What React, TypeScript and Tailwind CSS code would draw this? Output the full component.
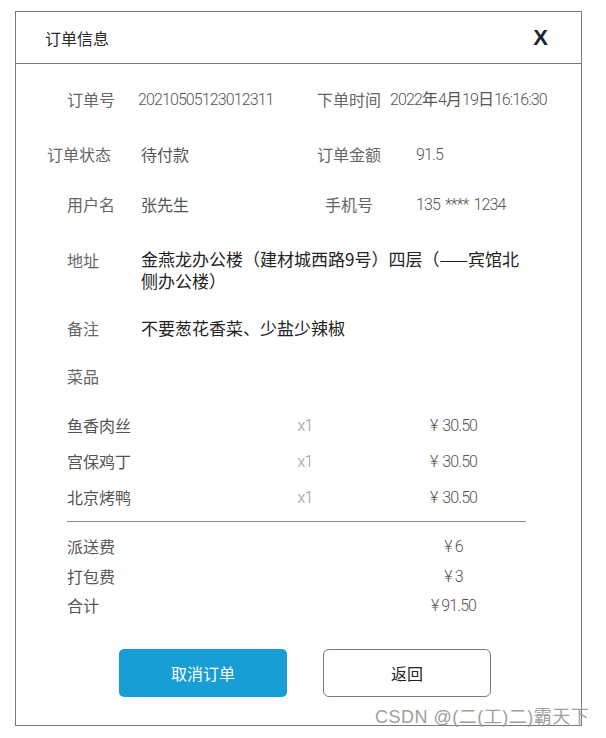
import React from "react";

function Num({ children, className = "" }: { children: React.ReactNode; className?: string }) {
  return (
    <span className={`font-['Roboto','Noto_Sans_CJK_SC',sans-serif] font-light tracking-[-0.9px] ${className}`}>
      {children}
    </span>
  );
}

const dishes = [
  { name: "鱼香肉丝", qty: "x1", price: "30.50" },
  { name: "宫保鸡丁", qty: "x1", price: "30.50" },
  { name: "北京烤鸭", qty: "x1", price: "30.50" },
];

export default function App() {
  return (
    <div className="relative w-[606px] h-[738px] bg-white overflow-hidden font-['Noto_Sans_CJK_SC',sans-serif]">
      <div className="ml-[15px] mt-[11px] w-[567px] h-[715px] border border-[#7a7a7a] flex flex-col">
        {/* Header */}
        <div className="h-[52px] border-b border-[#7a7a7a] flex items-center justify-between pl-[29px] pr-[33px]">
          <span className="text-[16px] text-[#2a2a2a] leading-none">订单信息</span>
          <span className="font-['Liberation_Sans',sans-serif] font-bold text-[22px] leading-none text-[#1c2330]">X</span>
        </div>

        {/* Row 1 */}
        <div className="mt-[23px] h-[24px] flex items-center text-[16px]">
          <div className="w-[98px] pl-[51px] text-[#666] whitespace-nowrap">订单号</div>
          <div className="ml-[24px] w-[179px] text-[#555] whitespace-nowrap">
            <Num>20210505123012311</Num>
          </div>
          <div className="w-[64px] text-center text-[#666] whitespace-nowrap">下单时间</div>
          <div className="ml-[9px] text-[#555] whitespace-nowrap">
            <Num>2022</Num>年<Num>4</Num>月<Num>19</Num>日<Num>16:16:30</Num>
          </div>
        </div>

        {/* Row 2 */}
        <div className="mt-[31px] h-[24px] flex items-center text-[16px]">
          <div className="w-[98px] pl-[31px] text-[#666] whitespace-nowrap">订单状态</div>
          <div className="ml-[27px] w-[176px] text-[#555] whitespace-nowrap">待付款</div>
          <div className="w-[64px] text-center text-[#666] whitespace-nowrap">订单金额</div>
          <div className="ml-[35px] text-[#555] whitespace-nowrap">
            <Num>91.5</Num>
          </div>
        </div>

        {/* Row 3 */}
        <div className="mt-[26px] h-[24px] flex items-center text-[16px]">
          <div className="w-[98px] pl-[51px] text-[#666] whitespace-nowrap">用户名</div>
          <div className="ml-[27px] w-[176px] text-[#555] whitespace-nowrap">张先生</div>
          <div className="w-[64px] text-center text-[#666] whitespace-nowrap">手机号</div>
          <div className="ml-[35px] text-[#555] whitespace-nowrap">
            <Num>135</Num>
            <Num className="ml-[5px]">****</Num>
            <Num className="ml-[5px]">1234</Num>
          </div>
        </div>

        {/* Address */}
        <div className="mt-[32px] flex items-start">
          <div className="w-[98px] pl-[51px] h-[22px] flex items-center text-[16px] text-[#666] whitespace-nowrap translate-y-[1px]">地址</div>
          <div className="ml-[27px] flex flex-col text-[17px] leading-[22px] text-[#222] whitespace-nowrap">
            <span>金燕龙办公楼（建材城西路9号）四层（——宾馆北</span>
            <span>侧办公楼）</span>
          </div>
        </div>

        {/* Remark */}
        <div className="mt-[25px] flex items-center h-[22px]">
          <div className="w-[98px] pl-[51px] text-[16px] text-[#666] whitespace-nowrap">备注</div>
          <div className="ml-[27px] text-[17px] leading-[22px] text-[#222] whitespace-nowrap">不要葱花香菜、少盐少辣椒</div>
        </div>

        {/* Dishes label */}
        <div className="mt-[25px] h-[24px] flex items-center pl-[51px] text-[16px] text-[#666]">菜品</div>

        {/* Dishes */}
        <div className="mt-[25px] flex flex-col gap-[12px]">
          {dishes.map((d) => (
            <div key={d.name} className="h-[24px] flex items-center text-[16px] pl-[51px]">
              <div className="w-[195px] text-[#555] whitespace-nowrap">{d.name}</div>
              <div className="w-[86px] text-center text-[#999]">
                <Num>{d.qty}</Num>
              </div>
              <div className="w-[211px] text-center text-[#555] whitespace-nowrap">
                <Num>¥</Num>
                <Num className="ml-[5px]">{d.price}</Num>
              </div>
            </div>
          ))}
        </div>

        {/* Divider */}
        <div className="mt-[12px] ml-[51px] w-[459px] h-px bg-[#8a8a8a]" />

        {/* Fees */}
        <div className="mt-[12px] flex flex-col gap-[5.5px]">
          {[
            ["派送费", "6"],
            ["打包费", "3"],
            ["合计", "91.50"],
          ].map(([k, v]) => (
            <div key={k} className="h-[24px] flex items-center text-[16px] pl-[51px]">
              <div className="w-[281px] text-[#555] whitespace-nowrap">{k}</div>
              <div className="w-[211px] text-center text-[#555] whitespace-nowrap">
                <Num>¥</Num>
                <Num className="ml-[3px]">{v}</Num>
              </div>
            </div>
          ))}
        </div>

        {/* Buttons */}
        <div className="mt-[32px] flex gap-[36px] pl-[103px]">
          <button className="w-[168px] h-[48px] rounded-[5px] bg-[#189dd5] text-white text-[16px] flex items-center justify-center">
            取消订单
          </button>
          <button className="w-[168px] h-[48px] rounded-[6px] border border-[#7a7a7a] bg-white text-[#222] text-[16px] flex items-center justify-center">
            返回
          </button>
        </div>
      </div>

      {/* Watermark */}
      <div className="absolute left-[375px] top-[705px] text-[18px] leading-[24px] tracking-[0.5px] text-[#a0a0a0] whitespace-nowrap font-['Liberation_Sans','Noto_Sans_CJK_SC',sans-serif]">
        CSDN @(二(工)二)霸天下
      </div>
    </div>
  );
}
